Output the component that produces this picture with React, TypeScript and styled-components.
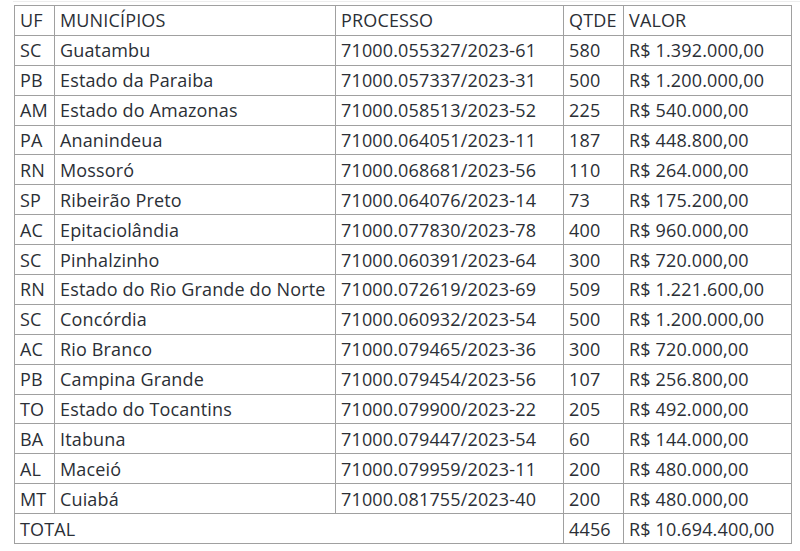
import React from "react";
import styled, { createGlobalStyle } from "styled-components";

const Global = createGlobalStyle`
  html, body { margin: 0; padding: 0; background: #ffffff; }
  body { font-family: "Open Sans", "Lato", sans-serif; }
`;

const Page = styled.div`
  padding: 1px 0 0 13px;
  width: 800px;
  height: 551px;
  box-sizing: border-box;
  background: #fff;
`;

const Frame = styled.div`
  border-top: 1px solid #ededed;
  padding: 3px 0 0 1px;
`;

const Table = styled.table`
  border-collapse: collapse;
  table-layout: fixed;
  width: 777px;
  color: #2b2f36;
  font-size: 18px;
  letter-spacing: 0.15px;
  font-family: "Open Sans", sans-serif;
`;

const Col = styled.col<{ $w: number }>`
  width: ${(p) => p.$w}px;
`;

const Row = styled.tr`
  height: 29.9px;
`;

const Cell = styled.td`
  border: 1px solid #a0a0a0;
  padding: 0 5px;
  white-space: nowrap;
  overflow: hidden;
  line-height: 1;
`;

const rows: [string, string, string, string, string][] = [
  ["SC", "Guatambu", "71000.055327/2023-61", "580", "R$ 1.392.000,00"],
  ["PB", "Estado da Paraiba", "71000.057337/2023-31", "500", "R$ 1.200.000,00"],
  ["AM", "Estado do Amazonas", "71000.058513/2023-52", "225", "R$ 540.000,00"],
  ["PA", "Ananindeua", "71000.064051/2023-11", "187", "R$ 448.800,00"],
  ["RN", "Mossoró", "71000.068681/2023-56", "110", "R$ 264.000,00"],
  ["SP", "Ribeirão Preto", "71000.064076/2023-14", "73", "R$ 175.200,00"],
  ["AC", "Epitaciolândia", "71000.077830/2023-78", "400", "R$ 960.000,00"],
  ["SC", "Pinhalzinho", "71000.060391/2023-64", "300", "R$ 720.000,00"],
  ["RN", "Estado do Rio Grande do Norte", "71000.072619/2023-69", "509", "R$ 1.221.600,00"],
  ["SC", "Concórdia", "71000.060932/2023-54", "500", "R$ 1.200.000,00"],
  ["AC", "Rio Branco", "71000.079465/2023-36", "300", "R$ 720.000,00"],
  ["PB", "Campina Grande", "71000.079454/2023-56", "107", "R$ 256.800,00"],
  ["TO", "Estado do Tocantins", "71000.079900/2023-22", "205", "R$ 492.000,00"],
  ["BA", "Itabuna", "71000.079447/2023-54", "60", "R$ 144.000,00"],
  ["AL", "Maceió", "71000.079959/2023-11", "200", "R$ 480.000,00"],
  ["MT", "Cuiabá", "71000.081755/2023-40", "200", "R$ 480.000,00"],
];

export default function App() {
  return (
    <Page>
      <Global />
      <Frame>
        <Table>
          <colgroup>
            <Col $w={40} />
            <Col $w={281} />
            <Col $w={228} />
            <Col $w={60} />
            <Col $w={168} />
          </colgroup>
          <tbody>
            <Row>
              <Cell>UF</Cell>
              <Cell>MUNICÍPIOS</Cell>
              <Cell>PROCESSO</Cell>
              <Cell>QTDE</Cell>
              <Cell>VALOR</Cell>
            </Row>
            {rows.map((r, i) => (
              <Row key={i}>
                {r.map((c, j) => (
                  <Cell key={j}>{c}</Cell>
                ))}
              </Row>
            ))}
            <Row>
              <Cell colSpan={3}>TOTAL</Cell>
              <Cell>4456</Cell>
              <Cell>R$ 10.694.400,00</Cell>
            </Row>
          </tbody>
        </Table>
      </Frame>
    </Page>
  );
}
